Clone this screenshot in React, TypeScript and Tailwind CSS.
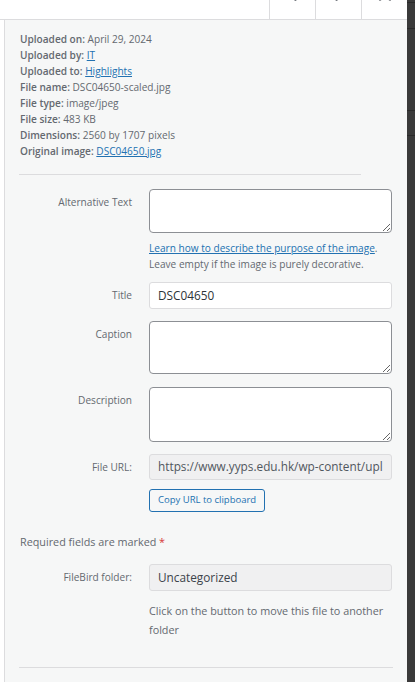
import React from "react";

const detailRows: { label: string; value: string; link?: boolean }[] = [
  { label: "Uploaded on:", value: "April 29, 2024" },
  { label: "Uploaded by:", value: "IT", link: true },
  { label: "Uploaded to:", value: "Highlights", link: true },
  { label: "File name:", value: "DSC04650-scaled.jpg" },
  { label: "File type:", value: "image/jpeg" },
  { label: "File size:", value: "483 KB" },
  { label: "Dimensions:", value: "2560 by 1707 pixels" },
  { label: "Original image:", value: "DSC04650.jpg", link: true },
];

function ChevronLeft() {
  return (
    <svg width="20" height="20" viewBox="0 0 24 24" fill="none" stroke="#787c82" strokeWidth="2.5" strokeLinecap="round" strokeLinejoin="round">
      <path d="m15 18-6-6 6-6" />
    </svg>
  );
}

function ChevronRight() {
  return (
    <svg width="20" height="20" viewBox="0 0 24 24" fill="none" stroke="#787c82" strokeWidth="2.5" strokeLinecap="round" strokeLinejoin="round">
      <path d="m9 18 6-6-6-6" />
    </svg>
  );
}

function CloseIcon() {
  return (
    <svg width="20" height="20" viewBox="0 0 24 24" fill="none" stroke="#8c8f94" strokeWidth="2.5" strokeLinecap="round">
      <path d="M18 6 6 18M6 6l12 12" />
    </svg>
  );
}

function Label({ children }: { children: React.ReactNode }) {
  return (
    <div className="w-[112px] shrink-0 pt-[5px] text-right text-[10.1px] leading-4 text-[#646970]">
      {children}
    </div>
  );
}

export default function App() {
  return (
    <div className="flex h-[682px] w-[415px] overflow-hidden bg-white font-['Open_Sans',sans-serif]">
      <div className="flex min-w-0 flex-1 flex-col">
        {/* modal toolbar: previous / next / close */}
        <div className="-mt-[31px] flex h-[51px] shrink-0 justify-end border-b border-[#dcdcde] bg-white">
          <button className="flex w-[46px] items-center justify-center border-l border-[#dcdcde] pt-[2px]">
            <ChevronLeft />
          </button>
          <button className="flex w-[46px] items-center justify-center border-l border-[#dcdcde] pt-[2px]">
            <ChevronRight />
          </button>
          <button className="flex w-[46px] items-center justify-center border-l border-[#dcdcde] pt-[2px]">
            <CloseIcon />
          </button>
        </div>

        <div className="flex min-h-0 flex-1">
          <div className="w-[4px] shrink-0 bg-white" />
          <div className="flex-1 border-l border-[#dcdcde] bg-[#f6f7f7] pl-[15px] pr-[15px]">
            {/* attachment details */}
            <div className="pb-[15px] pt-[11px] text-[10.1px] leading-4 text-[#646970]">
              {detailRows.map((r) => (
                <div key={r.label} className="whitespace-nowrap">
                  <span className="font-semibold">{r.label}</span>{" "}
                  {r.link ? (
                    <a className="text-[#2271b1] underline" href="#">
                      {r.value}
                    </a>
                  ) : (
                    <span>{r.value}</span>
                  )}
                </div>
              ))}
            </div>
            <div className="-ml-px h-px w-[342px] bg-[#dcdcde]" />

            {/* alternative text */}
            <div className="mt-[14px] flex gap-[17px]">
              <Label>Alternative Text</Label>
              <div className="w-[243px]">
                <textarea className="block h-[44px] w-full rounded-[4px] border border-[#8c8f94] bg-white px-2 py-1 text-[12px] outline-none" />
                <div className="mt-[7px] text-[10.1px] leading-4 text-[#646970]">
                  <a className="text-[#2271b1] underline" href="#">
                    Learn how to describe the purpose of the image
                  </a>
                  .
                  <br />
                  Leave empty if the image is purely decorative.
                </div>
              </div>
            </div>

            {/* title */}
            <div className="mt-[10px] flex gap-[17px]">
              <Label>Title</Label>
              <div className="flex h-[27px] w-[243px] items-center rounded-[3px] border border-[#dcdcde] bg-white px-[8px] text-[11.8px] text-[#2c3338]">
                DSC04650
              </div>
            </div>

            {/* caption */}
            <div className="mt-[12px] flex gap-[17px]">
              <Label>Caption</Label>
              <textarea className="block h-[53px] w-[243px] rounded-[4px] border border-[#8c8f94] bg-white outline-none" />
            </div>

            {/* description */}
            <div className="mt-[13px] flex gap-[17px]">
              <Label>Description</Label>
              <textarea className="block h-[55px] w-[243px] rounded-[4px] border border-[#8c8f94] bg-white outline-none" />
            </div>

            {/* file url */}
            <div className="mt-[12px] flex gap-[17px]">
              <Label>File URL:</Label>
              <div className="w-[243px]">
                <div className="flex h-[26px] items-center overflow-hidden whitespace-nowrap rounded-[3px] border border-[#dcdcde] bg-[#f0f0f1] px-[8px] text-[11.8px] text-[#50575e]">
                  <span className="overflow-hidden">https://www.yyps.edu.hk/wp-content/upl</span>
                </div>
                <button className="mt-[9px] flex h-[23px] items-center rounded-[3px] border border-[#2271b1] bg-[#f6f7f7] px-[8px] text-[9.5px] text-[#2271b1]">
                  Copy URL to clipboard
                </button>
              </div>
            </div>

            {/* required note */}
            <div className="mt-[20px] text-[10.8px] leading-5 text-[#646970]">
              Required fields are marked <span className="text-[#d63638]">*</span>
            </div>

            {/* filebird folder */}
            <div className="mt-[12px] flex gap-[17px]">
              <Label>FileBird folder:</Label>
              <div className="w-[243px]">
                <div className="flex h-[27px] items-center rounded-[3px] border border-[#dcdcde] bg-[#f0f0f1] px-[8px] text-[11.8px] text-[#3c434a]">
                  Uncategorized
                </div>
                <div className="mt-[11px] text-[10.8px] leading-[18.6px] text-[#646970]">
                  Click on the button to move this file to another folder
                </div>
              </div>
            </div>

            <div className="-ml-px mt-[28px] h-px w-[374px] bg-[#dcdcde]" />
          </div>
        </div>
      </div>

      {/* page scrollbar */}
      <div className="flex w-[8px] shrink-0 flex-col bg-[#3a3a3a]">
        <div className="mt-[2px] h-px bg-[#2a2a2a]" />
        <div className="mt-[25px] h-px bg-[#2a2a2a]" />
        <div className="mt-[81px] h-px bg-[#2a2a2a]" />
        <div className="mt-[24px] h-px bg-[#2a2a2a]" />
      </div>
    </div>
  );
}
